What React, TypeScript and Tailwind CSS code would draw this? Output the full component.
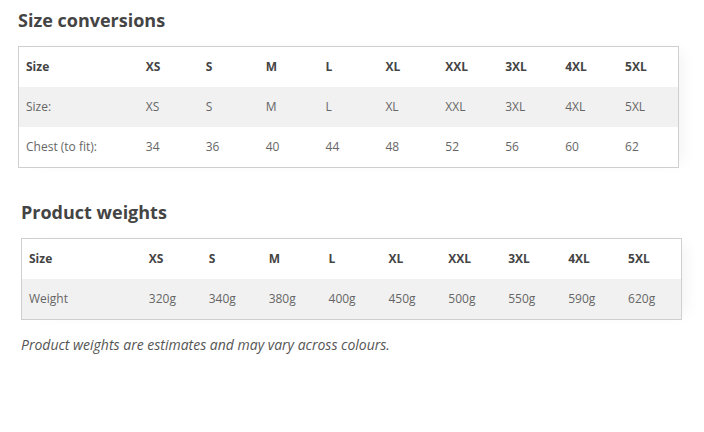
const sizes = ["XS", "S", "M", "L", "XL", "XXL", "3XL", "4XL", "5XL"];
const chest = ["34", "36", "40", "44", "48", "52", "56", "60", "62"];
const weights = ["320g", "340g", "380g", "400g", "450g", "500g", "550g", "590g", "620g"];

const Row = ({ label, cells, head, shade }: { label: string; cells: string[]; head?: boolean; shade?: boolean }) => (
  <div
    className={`flex h-[40px] items-center text-[12px] ${shade ? "bg-[#f1f1f1]" : "bg-white"} ${
      head ? "font-bold text-[#444]" : "text-[#666]"
    }`}
  >
    <div className="w-[120px] pl-[7px]">{label}</div>
    {cells.map((c) => (
      <div key={c + label} className="w-[60px] pl-[7px]">
        {c}
      </div>
    ))}
  </div>
);

export default function App() {
  return (
    <div className="h-[432px] w-[704px] bg-white font-['Open_Sans',sans-serif]">
      <div className="pl-[18px] pt-[8px]">
        <h2 className="h-[24px] text-[18px] leading-[24px] font-bold text-[#444]">Size conversions</h2>
        <div className="mt-[14px] w-[661px] border border-[#cfcfcf] shadow-[10px_0_14px_-6px_rgba(0,0,0,0.05)]">
          <Row label="Size" cells={sizes} head />
          <Row label="Size:" cells={sizes} shade />
          <Row label="Chest (to fit):" cells={chest} />
        </div>
      </div>
      <div className="pl-[21px] pt-[32px]">
        <h2 className="h-[24px] text-[18px] leading-[24px] font-bold text-[#444]">Product weights</h2>
        <div className="mt-[14px] w-[661px] border border-[#cfcfcf] shadow-[10px_0_14px_-6px_rgba(0,0,0,0.05)]">
          <Row label="Size" cells={sizes} head />
          <Row label="Weight" cells={weights} shade />
        </div>
        <p className="mt-[15px] text-[14px] italic leading-[20px] text-[#555]">
          Product weights are estimates and may vary across colours.
        </p>
      </div>
    </div>
  );
}
